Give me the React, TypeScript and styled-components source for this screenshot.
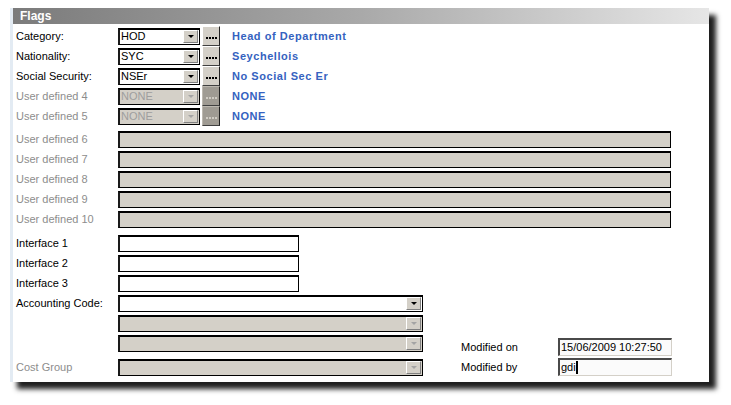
import React from "react";
import styled, { createGlobalStyle } from "styled-components";

const Global = createGlobalStyle`
  html, body { margin: 0; padding: 0; background: #ffffff; }
  body { font-family: "Liberation Sans", Arial, sans-serif; font-size: 11px; color: #000; }
`;

const Page = styled.div`
  box-sizing: border-box;
  width: 731px;
  height: 405px;
  padding: 8px 0 0 10px;
  overflow: hidden;
`;

const Panel = styled.div`
  width: 696px;
  height: 374px;
  background: #ffffff;
  border-left: 3px solid #e3ebf3;
  box-shadow: 7px 7px 5px rgba(0, 0, 0, 0.88);
  display: flex;
  flex-direction: column;
`;

const TitleBar = styled.div`
  height: 16px;
  display: flex;
  align-items: center;
  padding-left: 7px;
  background: linear-gradient(to right, #7b7b7b 0%, #a9a9a9 50%, #e6e6e6 100%);
  color: #ffffff;
  font-weight: bold;
  font-size: 12px;
`;

const Body = styled.div`
  display: flex;
  flex-direction: column;
  padding: 2px 0 0 3px;
`;

const Section = styled.div<{ $gap?: number }>`
  display: flex;
  flex-direction: column;
  margin-top: ${(p) => p.$gap ?? 0}px;
`;

const Row = styled.div`
  display: grid;
  grid-template-columns: 102px auto;
  align-items: center;
  height: 20px;
`;

const FlagRow = styled.div`
  display: grid;
  grid-template-columns: 102px 82px 20px auto;
  align-items: center;
  height: 20px;
`;

const Label = styled.span<{ $disabled?: boolean }>`
  color: ${(p) => (p.$disabled ? "#8d8d8d" : "#000")};
  white-space: nowrap;
`;

const ComboBox = styled.div<{ $w: number; $disabled?: boolean }>`
  box-sizing: border-box;
  width: ${(p) => p.$w}px;
  height: 17px;
  display: flex;
  align-items: center;
  justify-content: space-between;
  background: ${(p) => (p.$disabled ? "#d4d0c8" : "#ffffff")};
  border: 1px solid #000;
  border-top: 2px solid #000;
  border-left: 2px solid #1a1a1a;
  color: ${(p) => (p.$disabled ? "#9e9e9e" : "#000")};
  padding-left: 1px;
  line-height: 13px;
`;

const ArrowButton = styled.div<{ $disabled?: boolean }>`
  box-sizing: border-box;
  width: 15px;
  height: 13px;
  margin-right: 1px;
  background: #d4d0c8;
  border-top: 1px solid #ffffff;
  border-left: 1px solid #ffffff;
  border-right: 1px solid #808080;
  border-bottom: 1px solid #808080;
  display: flex;
  align-items: center;
  justify-content: center;
  &::after {
    content: "";
    width: 0;
    height: 0;
    border-left: 3px solid transparent;
    border-right: 3px solid transparent;
    border-top: 3px solid ${(p) => (p.$disabled ? "#a4a4a4" : "#000")};
  }
`;

const EllipsisButton = styled.div<{ $disabled?: boolean }>`
  box-sizing: border-box;
  width: 18px;
  height: 20px;
  margin-left: 2px;
  background: ${(p) => (p.$disabled ? "#9f9b93" : "#d4d0c8")};
  border-top: 1px solid ${(p) => (p.$disabled ? "#bcb8b0" : "#ffffff")};
  border-left: 1px solid ${(p) => (p.$disabled ? "#bcb8b0" : "#ffffff")};
  border-right: 1px solid #202020;
  border-bottom: 1px solid #404040;
  display: flex;
  align-items: center;
  justify-content: center;
  gap: 1px;
  padding-top: 4px;
`;

const Dot = styled.span<{ $disabled?: boolean }>`
  width: 1px;
  height: 2px;
  background: ${(p) => (p.$disabled ? "#cfcbc3" : "#000")};
  &:nth-child(n) {
    width: 2px;
  }
`;

const Description = styled.span`
  margin-left: 12px;
  color: #3562c0;
  font-weight: bold;
  letter-spacing: 0.55px;
  white-space: nowrap;
`;

const TextBox = styled.div<{ $w: number; $disabled?: boolean }>`
  box-sizing: border-box;
  width: ${(p) => p.$w}px;
  height: 17px;
  background: ${(p) => (p.$disabled ? "#d4d0c8" : "#ffffff")};
  border: 1px solid #000;
  border-top: 2px solid #000;
  border-left: 2px solid #1a1a1a;
`;

const Bottom = styled.div`
  display: flex;
  align-items: flex-end;
`;

const RightCol = styled.div`
  display: flex;
  flex-direction: column;
  margin-left: 38px;
`;

const ModRow = styled.div`
  display: grid;
  grid-template-columns: 97px auto;
  align-items: center;
  height: 20px;
`;

const InfoBox = styled.div`
  box-sizing: border-box;
  width: 114px;
  height: 18px;
  background: #fbfbfb;
  border-top: 2px solid #4a4a4a;
  border-left: 2px solid #4a4a4a;
  border-right: 1px solid #d4d0c8;
  border-bottom: 1px solid #d4d0c8;
  padding-left: 1px;
  display: flex;
  align-items: center;
  line-height: 13px;
  white-space: nowrap;
`;

const Caret = styled.span`
  display: inline-block;
  width: 2px;
  height: 13px;
  background: #000;
`;

const Spacer = styled.div<{ $h: number }>`
  height: ${(p) => p.$h}px;
`;

type Flag = { label: string; value: string; desc: string; disabled?: boolean };

const flags: Flag[] = [
  { label: "Category:", value: "HOD", desc: "Head of Department" },
  { label: "Nationality:", value: "SYC", desc: "Seychellois" },
  { label: "Social Security:", value: "NSEr", desc: "No Social Sec Er" },
  { label: "User defined 4", value: "NONE", desc: "NONE", disabled: true },
  { label: "User defined 5", value: "NONE", desc: "NONE", disabled: true },
];

const userDefined = ["User defined 6", "User defined 7", "User defined 8", "User defined 9", "User defined 10"];
const interfaces = ["Interface 1", "Interface 2", "Interface 3"];

function Combo({ w, value, disabled }: { w: number; value?: string; disabled?: boolean }) {
  return (
    <ComboBox $w={w} $disabled={disabled}>
      <span>{value}</span>
      <ArrowButton $disabled={disabled} />
    </ComboBox>
  );
}

function Ellipsis({ disabled }: { disabled?: boolean }) {
  return (
    <EllipsisButton $disabled={disabled} title="....">
      {[0, 1, 2, 3].map((i) => (
        <Dot key={i} $disabled={disabled} />
      ))}
    </EllipsisButton>
  );
}

export default function App() {
  return (
    <>
      <Global />
      <Page>
        <Panel>
          <TitleBar>Flags</TitleBar>
          <Body>
            <Section>
              {flags.map((f) => (
                <FlagRow key={f.label}>
                  <Label $disabled={f.disabled}>{f.label}</Label>
                  <Combo w={82} value={f.value} disabled={f.disabled} />
                  <Ellipsis disabled={f.disabled} />
                  <Description>{f.desc}</Description>
                </FlagRow>
              ))}
            </Section>
            <Section $gap={3}>
              {userDefined.map((l) => (
                <Row key={l}>
                  <Label $disabled>{l}</Label>
                  <TextBox $w={553} $disabled />
                </Row>
              ))}
            </Section>
            <Section $gap={4}>
              {interfaces.map((l) => (
                <Row key={l}>
                  <Label>{l}</Label>
                  <TextBox $w={181} />
                </Row>
              ))}
            </Section>
            <Bottom>
              <Section>
                <Row>
                  <Label>Accounting Code:</Label>
                  <Combo w={305} />
                </Row>
                <Row>
                  <span />
                  <Combo w={305} disabled />
                </Row>
                <Row>
                  <span />
                  <Combo w={305} disabled />
                </Row>
                <Spacer $h={4} />
                <Row>
                  <Label $disabled>Cost Group</Label>
                  <Combo w={305} disabled />
                </Row>
              </Section>
              <RightCol>
                <ModRow>
                  <Label>Modified on</Label>
                  <InfoBox>15/06/2009 10:27:50</InfoBox>
                </ModRow>
                <ModRow>
                  <Label>Modified by</Label>
                  <InfoBox>
                    gdi
                    <Caret />
                  </InfoBox>
                </ModRow>
              </RightCol>
            </Bottom>
          </Body>
        </Panel>
      </Page>
    </>
  );
}
